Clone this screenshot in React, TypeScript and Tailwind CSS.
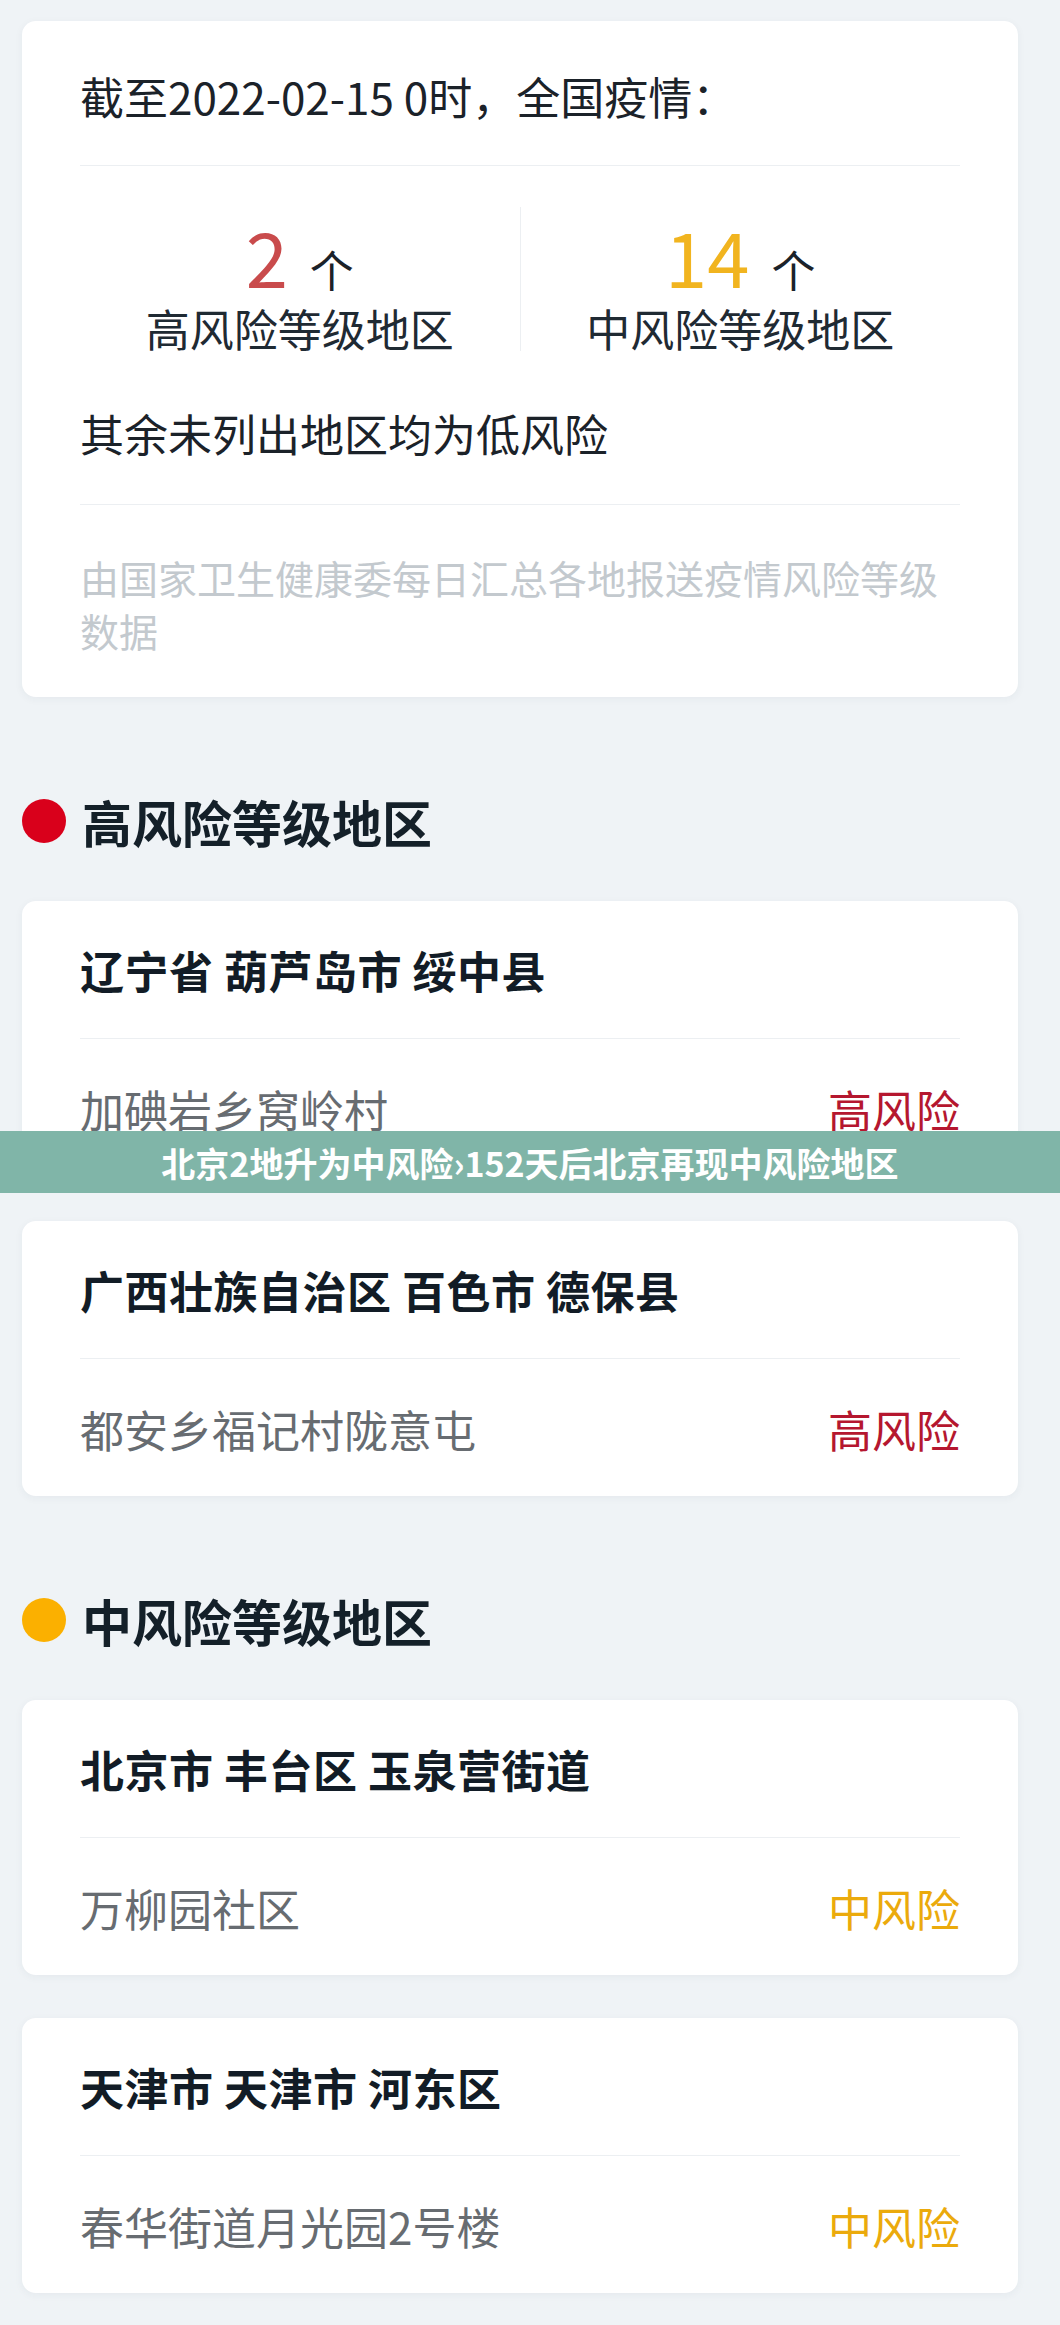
import React from "react";

type Area = {
  title: string;
  place: string;
  level: "high" | "mid";
};

const highAreas: Area[] = [
  { title: "辽宁省 葫芦岛市 绥中县", place: "加碘岩乡窝岭村", level: "high" },
  { title: "广西壮族自治区 百色市 德保县", place: "都安乡福记村陇意屯", level: "high" },
];

const midAreas: Area[] = [
  { title: "北京市 丰台区 玉泉营街道", place: "万柳园社区", level: "mid" },
  { title: "天津市 天津市 河东区", place: "春华街道月光园2号楼", level: "mid" },
];

// Einzelne Gebietskarte: Titel, Trennlinie, Ort + Risikostufe
function AreaCard({ area }: { area: Area }) {
  return (
    <div className="ml-[22px] mr-[42px] rounded-[14px] bg-white px-[58px] pt-[41px] pb-[39px] shadow-[0_2px_8px_rgba(30,50,70,0.05)]">
      <p className="text-[44px] font-bold leading-[56px] tracking-[0.5px] text-[#121c26]">{area.title}</p>
      <div className="mt-[40px] mb-[42px] h-px bg-[#eceff2]" />
      <div className="flex items-center justify-between">
        <span className="text-[44px] leading-[56px] text-[#676c71]">{area.place}</span>
        <span
          className={
            area.level === "high"
              ? "text-[44px] leading-[56px] text-[#b5172f]"
              : "text-[44px] leading-[56px] text-[#ebaa0c]"
          }
        >
          {area.level === "high" ? "高风险" : "中风险"}
        </span>
      </div>
    </div>
  );
}

function SectionHeading({ label, dot }: { label: string; dot: string }) {
  return (
    <div className="mt-[94px] mb-[50px] flex items-center gap-[16px] pl-[22px]">
      <span className={`h-[44px] w-[44px] rounded-full ${dot}`} />
      <h2 className="text-[50px] font-bold leading-[60px] text-[#142029]">{label}</h2>
    </div>
  );
}

function StatColumn({ count, color, label }: { count: string; color: string; label: string }) {
  return (
    <div className="flex flex-1 flex-col items-center pt-[16px]">
      <div className="flex h-[72px] items-baseline gap-[22px]">
        <span className={`text-[76px] leading-[72px] ${color}`}>{count}</span>
        <span className="text-[44px] leading-[56px] text-[#1b2229]">个</span>
      </div>
      <p className="mt-[9px] text-[44px] leading-[56px] text-[#1f2a33]">{label}</p>
    </div>
  );
}

export default function App() {
  return (
    <div className="relative min-h-[2325px] w-[1060px] bg-[#eff3f6] pt-[21px] pb-[33px] font-['Noto_Sans_CJK_SC','Noto_Sans',sans-serif]">
      {/* Übersicht */}
      <div className="ml-[22px] mr-[42px] rounded-[14px] bg-white px-[58px] pt-[47px] pb-[40px] shadow-[0_2px_8px_rgba(30,50,70,0.05)]">
        <p className="text-[44px] leading-[56px] text-[#1b2229]">截至2022-02-15 0时，全国疫情：</p>
        <div className="mt-[41px] h-px bg-[#eceff2]" />

        <div className="mt-[37px] flex items-start">
          <StatColumn count="2" color="text-[#c94b4c]" label="高风险等级地区" />
          <div className="mt-[4px] h-[144px] w-px bg-[#eceff2]" />
          <StatColumn count="14" color="text-[#f1b41f]" label="中风险等级地区" />
        </div>

        <p className="mt-[49px] text-[44px] leading-[56px] text-[#1b2229]">其余未列出地区均为低风险</p>
        <div className="mt-[43px] h-px bg-[#eceff2]" />
        <p className="mt-[46px] text-[39px] leading-[53px] text-[#c3c9ce]">
          由国家卫生健康委每日汇总各地报送疫情风险等级数据
        </p>
      </div>

      <SectionHeading label="高风险等级地区" dot="bg-[#d9001b]" />
      <div className="flex flex-col gap-[45px]">
        {highAreas.map((a) => (
          <AreaCard key={a.title} area={a} />
        ))}
      </div>

      <SectionHeading label="中风险等级地区" dot="bg-[#fbb000]" />
      <div className="flex flex-col gap-[43px]">
        {midAreas.map((a) => (
          <AreaCard key={a.title} area={a} />
        ))}
      </div>

      {/* Überlagerter Titelbalken */}
      <div className="absolute top-[1131px] left-0 flex h-[62px] w-full items-center justify-center bg-[#80b5a8]">
        <span className="text-[34px] font-bold text-white">
          北京2地升为中风险›152天后北京再现中风险地区
        </span>
      </div>
    </div>
  );
}
